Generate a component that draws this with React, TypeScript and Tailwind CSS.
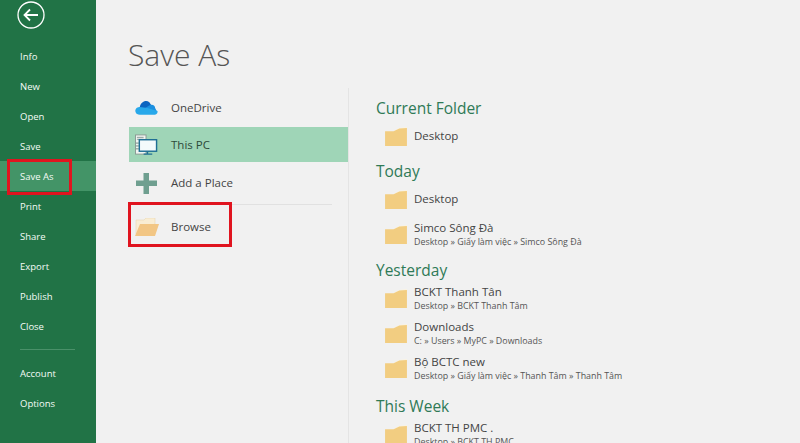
import React from 'react';

const FONT = "font-['Open_Sans','Noto_Sans',sans-serif]";

const FolderIcon = () => (
  <svg width="22" height="19" viewBox="0 0 23 20" className="shrink-0">
    <path d="M0 4 L9 4 L15 1 L23 0 L23 4 Z" fill="#fbf3e0" />
    <path d="M0 4.500 L9 4.500 L15 1.500 L23 1 L23 20 L0 20 Z" fill="#f2cd81" />
  </svg>
);

const OneDriveIcon = () => (
  <svg width="23" height="16" viewBox="0 0 24 16">
    <path d="M5 7 C6 2 11 -1 15 2 L17 5 L9 13 L2 9 Z" fill="#0c64c0" />
    <path d="M14 6 C18 3 21 6 21 8 L23 12 L15 14 L9 9 Z" fill="#1b8fe0" />
    <path d="M5 7 C1 7 0 10 0.500 12 C1 14.500 3 15 5 15 L20 15 C22 15 24 13.500 23.500 11 L13 8 Z" fill="#28a8ea" />
  </svg>
);

const ThisPcIcon = () => (
  <svg width="23" height="22" viewBox="0 0 24 22">
    <rect x="0.500" y="0.500" width="11" height="20" fill="#f1f5f2" stroke="#8a9a94" />
    <path d="M2 3 H9 M2 5 H9" stroke="#8a9a94" strokeWidth="1" />
    <path d="M1 9 H4 M1 12 H4 M1 15 H4" stroke="#6f8a82" strokeWidth="1" />
    <rect x="4.500" y="5.500" width="18" height="12" fill="#f4fafb" stroke="#1f6f94" strokeWidth="1.500" />
    <path d="M13 18 V20 M9 20.500 H18" stroke="#1f6f94" strokeWidth="1.500" />
  </svg>
);

const PlusIcon = () => (
  <svg width="21" height="21" viewBox="0 0 21 21" className="ml-[1px]">
    <path d="M7.500 0 H13 V7.500 H21 V13 H13 V21 H7.500 V13 H0 V7.500 H7.500 Z" fill="#6f9f90" />
  </svg>
);

const BrowseIcon = () => (
  <svg width="24" height="18" viewBox="0 0 24 18">
    <path d="M1 2 L9 2 L11 0 L20 0 L20 6 L1 16 Z" fill="#f9edd3" stroke="#e5d3ab" strokeWidth="0.500" />
    <path d="M5 6 L24 6 L20 18 L0 18 Z" fill="#f2c684" />
  </svg>
);

const BackIcon = () => (
  <svg width="28" height="28" viewBox="0 0 28 28" fill="none" stroke="#ffffff">
    <circle cx="14" cy="14" r="13" strokeWidth="1.300" />
    <path d="M21 14 H8 M13 8.500 L7.500 14 L13 19.500" strokeWidth="1.800" />
  </svg>
);

const topNav = ['Info', 'New', 'Open', 'Save', 'Save As', 'Print', 'Share', 'Export', 'Publish', 'Close'];

const places = [
  { label: 'OneDrive', icon: <OneDriveIcon />, h: 'h-[39px]' },
  { label: 'This PC', icon: <ThisPcIcon />, h: 'h-[35px]', active: true },
  { label: 'Add a Place', icon: <PlusIcon />, h: 'h-[42px]' },
];

const recent = [
  { title: 'Current Folder', cls: 'mt-0', items: [{ name: 'Desktop' }] },
  {
    title: 'Today',
    cls: 'mt-[6px]',
    items: [
      { name: 'Desktop' },
      { name: 'Simco Sông Đà', path: 'Desktop » Giấy làm việc » Simco Sông Đà' },
    ],
  },
  {
    title: 'Yesterday',
    cls: 'mt-[7px]',
    items: [
      { name: 'BCKT Thanh Tân', path: 'Desktop » BCKT Thanh Tâm' },
      { name: 'Downloads', path: 'C: » Users » MyPC » Downloads' },
      { name: 'Bộ BCTC new', path: 'Desktop » Giấy làm việc » Thanh Tâm » Thanh Tâm' },
    ],
  },
  {
    title: 'This Week',
    cls: 'mt-[9px]',
    items: [{ name: 'BCKT TH PMC .', path: 'Desktop » BCKT TH PMC' }],
  },
];

export default function App() {
  return (
    <div className={`${FONT} relative flex h-[443px] w-[800px] overflow-hidden bg-[#f1f1f1] text-[#444444]`}>
      {/* Backstage sidebar */}
      <aside className="flex w-[96px] shrink-0 flex-col bg-[#217346] text-[9.5px] text-[#f4fbf6]">
        <div className="ml-[17px] mt-[1px] h-[40px]">
          <BackIcon />
        </div>
        {topNav.map((item) => (
          <div
            key={item}
            className={`flex h-[30px] items-center pl-[20px] pt-[3px] ${item === 'Save As' ? 'bg-[#439467]' : ''}`}
          >
            {item}
          </div>
        ))}
        <div className="ml-[20px] mr-[21px] mt-[8px] border-t border-[#4a9069]" />
        <div className="mt-[8px] flex h-[30px] items-center pl-[20px] pt-[2px]">Account</div>
        <div className="flex h-[30px] items-center pl-[20px] pt-[2px]">Options</div>
      </aside>

      {/* Page body */}
      <main className="flex min-w-0 flex-1 flex-col pl-[32px]">
        <h1 className="mt-[32px] h-[56px] shrink-0 text-[30px] font-light leading-[46px] text-[#555555]">Save As</h1>
        <div className="flex min-h-0 flex-1">
          {/* Places */}
          <div className="w-[220px] shrink-0 pl-[1px]">
            {places.map((p) => (
              <div
                key={p.label}
                className={`flex items-center text-[11.5px] ${p.h} ${p.active ? 'bg-[#9fd5b7] text-[#2d4a3a]' : ''}`}
              >
                <span className="flex w-[42px] pl-[6px]">{p.icon}</span>
                {p.label}
              </div>
            ))}
            <div className="ml-[2px] mr-[16px] border-t border-[#e1e1e1]" />
            <div className="flex h-[44px] items-center text-[11.5px]">
              <span className="flex w-[42px] pl-[6px]">
                <BrowseIcon />
              </span>
              Browse
            </div>
          </div>

          {/* Recent folders */}
          <div className="min-w-0 flex-1 overflow-hidden border-l border-[#e4e4e4] pl-[27px] pt-[9px]">
            {recent.map((group) => (
              <section key={group.title} className={group.cls}>
                <h2 className="h-[22px] text-[15.5px] leading-[22px] text-[#2f7a57]">{group.title}</h2>
                {group.items.map((it) => (
                  <div key={it.name + (it.path ?? '')} className="flex h-[35px] items-center pl-[9px]">
                    <FolderIcon />
                    <div className={`ml-[7px] ${it.path ? '' : 'pb-[2px]'}`}>
                      <div className="text-[11.5px] leading-[15px]">{it.name}</div>
                      {it.path && <div className="text-[8.9px] leading-[14px] text-[#555555]">{it.path}</div>}
                    </div>
                  </div>
                ))}
              </section>
            ))}
          </div>
        </div>
      </main>

      {/* Red annotation boxes */}
      <div className="absolute left-[7px] top-[159px] h-[36px] w-[65px] border-[3px] border-[#e0141f]" />
      <div className="absolute left-[128px] top-[202px] h-[45px] w-[104px] border-[3px] border-[#e0141f]" />
    </div>
  );
}
